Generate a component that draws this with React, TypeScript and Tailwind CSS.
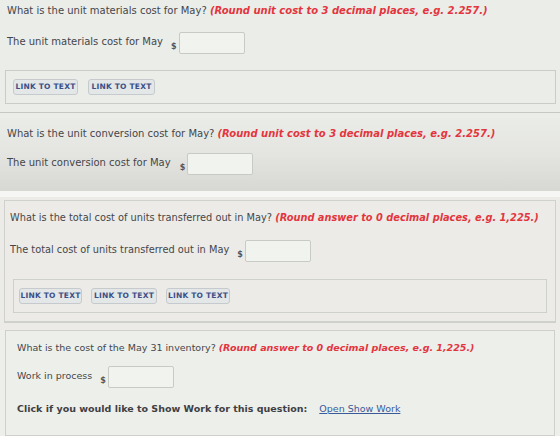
import React from "react";

const font = { fontFamily: '"DejaVu Sans", Verdana, sans-serif' };

function LinkButton({ w }: { w: string }) {
  return (
    <button
      className={`${w} h-[16px] rounded-[3px] border border-[#c6cacd] bg-[#e3e7e8] text-[7.5px] font-bold tracking-[0.2px] text-[#3c5088] flex items-center justify-center whitespace-nowrap`}
    >
      LINK TO TEXT
    </button>
  );
}

function Question({ text, hint, size = "text-[10px]" }: { text: string; hint: string; size?: string }) {
  return (
    <p className={`${size} leading-[13px] text-[#45464a] whitespace-nowrap`}>
      {text}{" "}
      <span className="font-bold italic text-[#e3353d]">{hint}</span>
    </p>
  );
}

function AnswerRow({
  label,
  gap,
  mt,
  size = "text-[10px]",
}: {
  label: string;
  gap: string;
  mt: string;
  size?: string;
}) {
  return (
    <div className={`${mt} flex items-start h-[22px]`}>
      <span className={`mt-[3px] ${size} leading-[13px] text-[#45464a] whitespace-nowrap`}>
        {label}
      </span>
      <span className={`${gap} mt-[10px] text-[8px] leading-[10px] font-bold text-[#55565a]`}>$</span>
      <div className="ml-[2px] w-[66px] h-[22px] rounded-[2px] border border-[#c7cbc5] bg-[#f1f3ef]" />
    </div>
  );
}

export default function App() {
  return (
    <div className="w-[560px] h-[436px] overflow-hidden bg-[#eceeea]" style={font}>
      {/* first question: unit materials cost */}
      <section className="h-[118px] bg-[#ebede9] px-[7px] pt-[4px]">
        <Question
          text="What is the unit materials cost for May?"
          hint="(Round unit cost to 3 decimal places, e.g. 2.257.)"
        />
        <AnswerRow label="The unit materials cost for May" gap="ml-[8px]" mt="mt-[15px]" />
        <div className="mt-[16px] -ml-[2px] -mr-[3px] h-[34px] border border-[#c9ccc8] flex items-center gap-[10px] px-[7px]">
          <LinkButton w="w-[65px]" />
          <LinkButton w="w-[67px]" />
        </div>
        <div className="mt-[8px] -mx-[7px] border-t border-[#c5c8c4]" />
      </section>

      {/* second question: unit conversion cost */}
      <section className="h-[73px] bg-gradient-to-b from-[#eaece8] via-[#e4e5e1] to-[#d7d8d4] px-[7px] pt-[9px]">
        <Question
          text="What is the unit conversion cost for May?"
          hint="(Round unit cost to 3 decimal places, e.g. 2.257.)"
        />
        <AnswerRow label="The unit conversion cost for May" gap="ml-[9px]" mt="mt-[13px]" />
      </section>
      <div className="h-[6px] bg-[#f6f6f4]" />

      {/* third question: cost transferred out */}
      <section className="bg-[#ecebe7] pt-[3px] px-[4px] h-[133px]">
        <div className="h-[122px] border border-[#cfd1cc] px-[5px] pt-[10px]">
          <Question
            size="text-[9.8px]"
            text="What is the total cost of units transferred out in May?"
            hint="(Round answer to 0 decimal places, e.g. 1,225.)"
          />
          <AnswerRow
            size="text-[9.8px]"
            label="The total cost of units transferred out in May"
            gap="ml-[8px]"
            mt="mt-[16px]"
          />
          <div className="mt-[17px] ml-[3px] mr-[3px] h-[34px] border border-[#cdd0cb] flex items-center gap-[9px] px-[5px]">
            <LinkButton w="w-[63px]" />
            <LinkButton w="w-[66px]" />
            <LinkButton w="w-[64px]" />
          </div>
        </div>
        <div className="border-t border-[#cdd0cb]" />
      </section>

      {/* fourth question: May 31 inventory */}
      <section className="bg-[#edefeb] px-[5px]">
        <div className="h-[106px] border border-[#cdd0cb] pl-[11px] pt-[10px]">
          <Question
            size="text-[9.5px]"
            text="What is the cost of the May 31 inventory?"
            hint="(Round answer to 0 decimal places, e.g. 1,225.)"
          />
          <AnswerRow size="text-[9.5px]" label="Work in process" gap="ml-[8px]" mt="mt-[12px]" />
          <p className="mt-[14px] text-[9.5px] leading-[13px] text-[#3f4044] whitespace-nowrap">
            <span className="font-bold">Click if you would like to Show Work for this question:</span>
            <a className="ml-[12px] text-[#3b5a9a] underline">Open Show Work</a>
          </p>
        </div>
      </section>
    </div>
  );
}
